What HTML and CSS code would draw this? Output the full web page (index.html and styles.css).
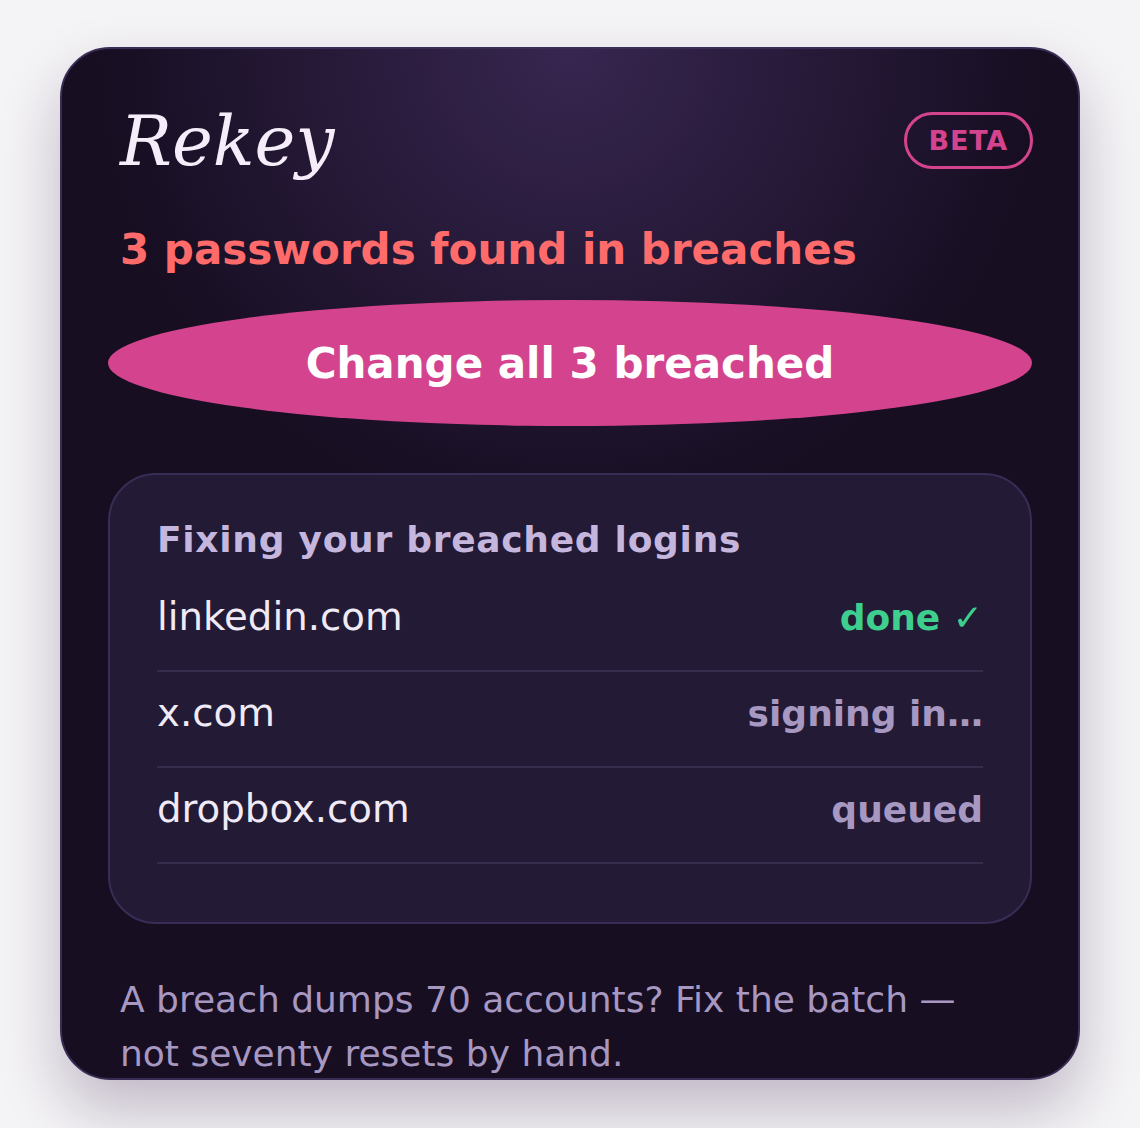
FILE: index.html
```html
<!DOCTYPE html>
<html lang="en">

<head>
  <meta charset="UTF-8" />
  <meta name="viewport" content="width=device-width, initial-scale=1.0" />
  <title>Rekey</title>
  <link rel="stylesheet" href="styles.css">
</head>

<body>
  <div class="card">
    <!-- Header -->
    <div class="card-header">
      <h1 class="logo">Rekey</h1>
      <span class="badge">BETA</span>
    </div>

    <h2 class="alert-title">3 passwords found in breaches</h2>

    <button class="fix-btn">Change all 3 breached</button>

    <!-- Progress panel -->
    <div class="panel">
      <h3 class="panel-title">Fixing your breached logins</h3>
      <div class="row">
        <span class="site">linkedin.com</span>
        <span class="status done">done <span class="tick">✓</span></span>
      </div>
      <div class="row">
        <span class="site">x.com</span>
        <span class="status">signing in…</span>
      </div>
      <div class="row">
        <span class="site">dropbox.com</span>
        <span class="status">queued</span>
      </div>
    </div>

    <p class="footnote">A breach dumps 70 accounts? Fix the batch — not seventy resets by hand.</p>
  </div>
</body>

</html>
```

FILE: styles.css
```css
/* Page */
body {
  margin: 0;
  padding: 47px 60px 48px;
  background-color: #f4f3f5;
  font-family: "DejaVu Sans", Arial, sans-serif;
}

/* Main card */
.card {
  box-sizing: border-box;
  height: 1033px;
  overflow: hidden;
  padding: 48px 46px;
  border: 2px solid #3a2d55;
  border-radius: 50px;
  background: radial-gradient(circle at 50% 0, #372650 0, #170e22 470px);
  box-shadow: 0 30px 60px rgba(50, 25, 70, 0.26);
}

.card-header {
  display: flex;
  justify-content: space-between;
  align-items: center;
  padding-left: 12px;
  margin-right: -1px;
}

.logo {
  margin: 0;
  font-family: "DejaVu Serif", "Liberation Serif", serif;
  font-style: italic;
  font-weight: normal;
  font-size: 69px;
  line-height: 84px;
  color: #f5eefa;
  padding-top: 2px;
}

.badge {
  border: 3px solid #d4448e;
  border-radius: 30px;
  padding: 0 22px;
  height: 51px;
  line-height: 51px;
  font-size: 27px;
  font-weight: bold;
  letter-spacing: 0.03em;
  color: #d4448e;
  margin-top: 1px;
}

.alert-title {
  margin: 40px 0 22px;
  padding-left: 12px;
  font-size: 42px;
  line-height: 1.3;
  color: #ff6b6b;
}

/* Big ellipse button */
.fix-btn {
  display: block;
  width: 100%;
  padding: 36px 0 34px;
  border: none;
  border-radius: 50%;
  background-color: #d4448e;
  color: #fff;
  font-family: inherit;
  font-size: 42px;
  font-weight: bold;
  line-height: 56px;
  cursor: pointer;
}

/* Panel */
.panel {
  margin-top: 47px;
  padding: 43px 47px 58px;
  border: 2px solid #3a2d55;
  border-radius: 48px;
  background-color: #231a35;
}

.panel-title {
  margin: 0 0 15px;
  font-size: 36px;
  line-height: 1.2;
  letter-spacing: 0.02em;
  color: #c5b6de;
}

.row {
  display: flex;
  justify-content: space-between;
  align-items: baseline;
  padding: 14px 0 27px;
  border-bottom: 2px solid #372c4c;
}

.site {
  font-size: 38.7px;
  line-height: 53px;
  color: #f0eaf6;
}

.status {
  font-size: 36px;
  font-weight: bold;
  color: #a798c2;
}

.status.done {
  color: #3ecf8e;
}

.tick {
  font-weight: normal;
}

.footnote {
  margin: 49px 0 0;
  padding-left: 12px;
  max-width: 870px;
  font-size: 36px;
  line-height: 54px;
  color: #a798c2;
}
```
